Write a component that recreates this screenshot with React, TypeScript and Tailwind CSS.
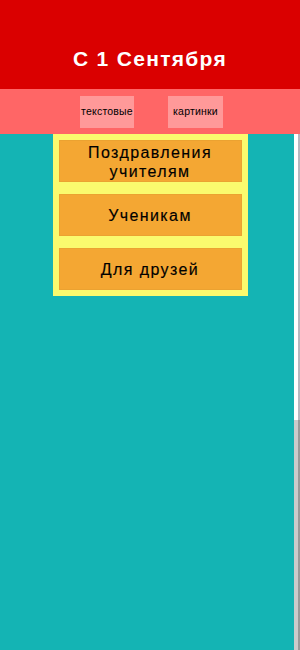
const CATEGORIES = ["Поздравления учителям", "Ученикам", "Для друзей"];

export default function App() {
  return (
    <div className="flex h-[650px] w-[300px] flex-col bg-[#14b4b4] font-['Liberation_Sans',Arial,sans-serif]">
      {/* Header */}
      <header className="flex h-[89px] shrink-0 items-start justify-center bg-[#da0000] pt-[46px]">
        <h1 className="text-[21px] font-bold leading-[25px] tracking-[1.3px] text-white">
          С 1 Сентября
        </h1>
      </header>

      {/* Tabs */}
      <nav className="flex h-[45px] shrink-0 items-center justify-center gap-[34px] bg-[#ff6666] pl-[3px]">
        <button className="h-[32px] w-[54px] bg-[#ff9999] text-[10.5px] tracking-[0.2px] text-black">
          текстовые
        </button>
        <button className="h-[32px] w-[55px] bg-[#ff9999] text-[10.5px] tracking-[0.2px] text-black">
          картинки
        </button>
      </nav>

      {/* Content */}
      <main className="relative min-h-0 flex-1">
        <div className="flex justify-center">
          <div className="flex w-[195px] flex-col bg-[#fafa6e]">
            {CATEGORIES.map((name) => (
              <button
                key={name}
                className="m-[6px] flex h-[42px] items-center justify-center border border-[#eba231] bg-[#f4a733] px-2 pt-[1px] text-[16px] leading-[19px] tracking-[1.4px] text-black [-webkit-text-stroke:0.15px_#000]"
              >
                {name}
              </button>
            ))}
          </div>
        </div>

        {/* scrollbar */}
        <div className="absolute inset-y-0 right-0 flex w-[6px] flex-col">
          <div className="h-[286px] border-r-2 border-[#b8b8c0] bg-white" />
          <div className="flex-1 border-r-2 border-[#9a9a9a] bg-[#cbcbcb]" />
        </div>
      </main>
    </div>
  );
}
